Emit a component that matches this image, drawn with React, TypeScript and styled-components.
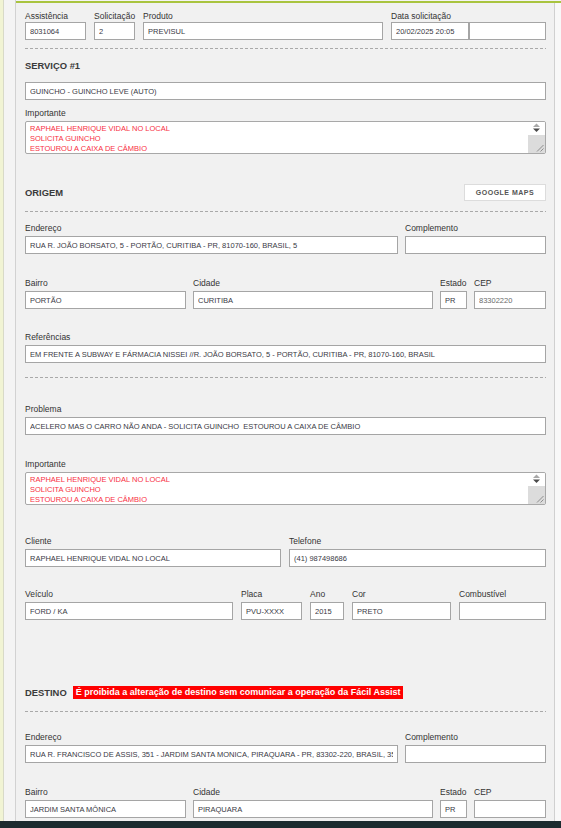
import React from "react";
import styled, { createGlobalStyle } from "styled-components";

const Global = createGlobalStyle`
  html, body { margin: 0; padding: 0; background: #f4f4f4; }
  body { font-family: "Liberation Sans", Arial, sans-serif; }
  * { box-sizing: border-box; }
`;

const Page = styled.div`
  display: flex;
  height: 828px;
  overflow: hidden;
  background: #f4f4f4;
`;

const YellowStrip = styled.div`
  width: 4px;
  flex: none;
  background: #f1f4d4;
  border-right: 1px solid #d8dac8;
`;

const Gutter = styled.div`
  width: 12px;
  flex: none;
  background: #f4f4f4;
  border-right: 1px solid #d2d2d2;
`;

const Main = styled.div`
  flex: 1;
  display: flex;
  margin-top: 1px;
  border-top: 2px solid #a9c43f;
`;

const Panel = styled.main`
  flex: 1;
  background: #f1f1f1;
  border-right: 1px solid #d0d0d0;
  padding: 7px 8px 0 9px;
  display: flex;
  flex-direction: column;
`;

const RightPad = styled.div`
  width: 6px;
  flex: none;
  background: #f8f8f8;
`;

const Row = styled.div<{ $mt: number; $gap?: number }>`
  display: flex;
  gap: ${(p) => p.$gap ?? 8}px;
  margin-top: ${(p) => p.$mt}px;
`;

const Field = styled.div<{ $w?: number }>`
  display: flex;
  flex-direction: column;
  ${(p) => (p.$w ? `width: ${p.$w}px; flex: none;` : `flex: 1; min-width: 0;`)}
`;

const Label = styled.label<{ $tight?: boolean }>`
  font-size: 8.5px;
  line-height: 12px;
  color: #333;
  margin-bottom: ${(p) => (p.$tight ? 0 : 2)}px;
  white-space: nowrap;
`;

const InputPair = styled.div`
  display: flex;
`;

const Input = styled.input<{ $muted?: boolean; $w?: number }>`
  display: block;
  height: 18px;
  ${(p) => (p.$w ? `width: ${p.$w}px; flex: none;` : `width: 100%;`)}
  min-width: 0;
  margin: 0;
  border: 1px solid #a5a5a5;
  border-radius: 0;
  background: #fff;
  padding: 0 4px;
  font-family: inherit;
  font-size: 7.5px;
  color: ${(p) => (p.$muted ? "#6a6a6a" : "#393944")};
  outline: none;
`;

const Divider = styled.hr<{ $mt: number }>`
  margin: ${(p) => p.$mt}px 0 0 0;
  border: none;
  height: 1px;
  background: repeating-linear-gradient(to right, #a9a9a9 0 3px, transparent 3px 5px);
`;

const SectionTitle = styled.h3<{ $mt?: number }>`
  margin: ${(p) => p.$mt ?? 0}px 0 0 0;
  font-size: 9.4px;
  font-weight: bold;
  line-height: 13px;
  color: #3a3a3a;
`;

const SectionHeader = styled.div<{ $mt: number; $h: number }>`
  display: flex;
  align-items: center;
  justify-content: space-between;
  height: ${(p) => p.$h}px;
  margin-top: ${(p) => p.$mt}px;
`;

const TitleGroup = styled.div`
  display: flex;
  align-items: center;
`;

const Warning = styled.span`
  background: #ff0000;
  color: #fff;
  font-weight: bold;
  font-size: 9px;
  line-height: 13px;
  padding: 0 3px;
  margin-left: 6px;
  white-space: nowrap;
`;

const MapsButton = styled.button`
  width: 82px;
  height: 17px;
  background: #fff;
  border: 1px solid #dcdcdc;
  padding: 0;
  font-family: inherit;
  font-weight: bold;
  font-size: 7px;
  letter-spacing: 0.5px;
  color: #555;
  cursor: pointer;
`;

const TextBox = styled.div`
  display: flex;
  height: 33px;
  border: 1px solid #a8a8a8;
  border-radius: 2px;
  background: #fff;
  overflow: hidden;
`;

const TextArea = styled.textarea`
  flex: 1;
  margin: 0;
  border: none;
  outline: none;
  resize: none;
  overflow: hidden;
  padding: 2px 4px;
  font-family: inherit;
  font-size: 7.5px;
  line-height: 10px;
  color: #f8303f;
  background: transparent;
`;

const ScrollBar = styled.div`
  width: 17px;
  flex: none;
  display: flex;
  flex-direction: column;
`;

const ScrollArrows = styled.div`
  height: 13px;
  display: flex;
  justify-content: center;
  padding-top: 1px;
  background: #fff;
`;

const ScrollTrack = styled.div`
  flex: 1;
  background: #dcdcdc;
  display: flex;
  align-items: flex-end;
  justify-content: flex-end;
  padding: 0 1px 1px 0;
`;

const Footer = styled.div`
  position: fixed;
  left: 0;
  right: 0;
  bottom: 0;
  height: 7px;
  background: #1c2b2f;
`;

type FieldProps = {
  label: string;
  value?: string;
  w?: number;
  tight?: boolean;
  muted?: boolean;
};

const TextField = ({ label, value = "", w, tight, muted }: FieldProps) => (
  <Field $w={w}>
    <Label $tight={tight}>{label}</Label>
    <Input readOnly value={value} $muted={muted} />
  </Field>
);

const Notes = ({ label, lines, mt }: { label: string; lines: string[]; mt: number }) => (
  <Row $mt={mt}>
    <Field>
      <Label>{label}</Label>
      <TextBox>
        <TextArea readOnly value={lines.join("\n")} />
        <ScrollBar>
          <ScrollArrows>
            <svg width="9" height="10" viewBox="0 0 9 10">
              <polygon points="1,4 4.5,0.5 8,4" fill="#a8a8a8" />
              <polygon points="1,5.5 8,5.5 4.5,9" fill="#4a4a4a" />
            </svg>
          </ScrollArrows>
          <ScrollTrack>
            <svg width="8" height="8" viewBox="0 0 8 8">
              <line x1="7.5" y1="1" x2="1" y2="7.5" stroke="#7a7a7a" strokeWidth="0.8" />
              <line x1="7.5" y1="4.5" x2="4.5" y2="7.5" stroke="#7a7a7a" strokeWidth="0.8" />
            </svg>
          </ScrollTrack>
        </ScrollBar>
      </TextBox>
    </Field>
  </Row>
);

const notes = [
  "RAPHAEL HENRIQUE VIDAL NO LOCAL",
  "SOLICITA GUINCHO",
  "ESTOUROU A CAIXA DE CÂMBIO",
];

export default function App() {
  return (
    <>
      <Global />
      <Page>
        <YellowStrip />
        <Gutter />
        <Main>
          <Panel>
            <Row $mt={0}>
              <TextField label="Assistência" value="8031064" w={61} tight />
              <TextField label="Solicitação" value="2" w={41} tight />
              <TextField label="Produto" value="PREVISUL" w={240} tight />
              <Field>
                <Label $tight>Data solicitação</Label>
                <InputPair>
                  <Input readOnly value="20/02/2025 20:05" $w={78} />
                  <Input readOnly value="" />
                </InputPair>
              </Field>
            </Row>

            <Divider $mt={8} />

            <SectionTitle $mt={10}>SERVIÇO #1</SectionTitle>
            <Row $mt={10}>
              <Field>
                <Input readOnly value="GUINCHO - GUINCHO LEVE (AUTO)" />
              </Field>
            </Row>

            <Notes label="Importante" lines={notes} mt={7} />

            <SectionHeader $mt={30} $h={17}>
              <SectionTitle>ORIGEM</SectionTitle>
              <MapsButton type="button">GOOGLE MAPS</MapsButton>
            </SectionHeader>

            <Divider $mt={10} />

            <Row $mt={10} $gap={7}>
              <TextField
                label="Endereço"
                value="RUA R. JOÃO BORSATO, 5 - PORTÃO, CURITIBA - PR, 81070-160, BRASIL, 5"
              />
              <TextField label="Complemento" w={141} />
            </Row>

            <Row $mt={23} $gap={7}>
              <TextField label="Bairro" value="PORTÃO" w={161} />
              <TextField label="Cidade" value="CURITIBA" />
              <TextField label="Estado" value="PR" w={27} />
              <TextField label="CEP" value="83302220" w={72} muted />
            </Row>

            <Row $mt={22}>
              <TextField
                label="Referências"
                value="EM FRENTE A SUBWAY E FÁRMACIA NISSEI //R. JOÃO BORSATO, 5 - PORTÃO, CURITIBA - PR, 81070-160, BRASIL"
              />
            </Row>

            <Divider $mt={14} />

            <Row $mt={25}>
              <TextField
                label="Problema"
                value="ACELERO MAS O CARRO NÃO ANDA - SOLICITA GUINCHO  ESTOUROU A CAIXA DE CÂMBIO"
              />
            </Row>

            <Notes label="Importante" lines={notes} mt={23} />

            <Row $mt={30}>
              <TextField label="Cliente" value="RAPHAEL HENRIQUE VIDAL NO LOCAL" w={256} />
              <TextField label="Telefone" value="(41) 987498686" />
            </Row>

            <Row $mt={21}>
              <TextField label="Veículo" value="FORD / KA" w={208} />
              <TextField label="Placa" value="PVU-XXXX" w={61} />
              <TextField label="Ano" value="2015" w={34} />
              <TextField label="Cor" value="PRETO" w={99} />
              <TextField label="Combustível" />
            </Row>

            <SectionHeader $mt={66} $h={13}>
              <TitleGroup>
                <SectionTitle>DESTINO</SectionTitle>
                <Warning>É proibida a alteração de destino sem comunicar a operação da Fácil Assist</Warning>
              </TitleGroup>
            </SectionHeader>

            <Divider $mt={12} />

            <Row $mt={19} $gap={7}>
              <TextField
                label="Endereço"
                value="RUA R. FRANCISCO DE ASSIS, 351 - JARDIM SANTA MONICA, PIRAQUARA - PR, 83302-220, BRASIL, 351"
              />
              <TextField label="Complemento" w={141} />
            </Row>

            <Row $mt={23} $gap={7}>
              <TextField label="Bairro" value="JARDIM SANTA MÔNICA" w={161} />
              <TextField label="Cidade" value="PIRAQUARA" />
              <TextField label="Estado" value="PR" w={27} />
              <TextField label="CEP" w={72} />
            </Row>
          </Panel>
          <RightPad />
        </Main>
      </Page>
      <Footer />
    </>
  );
}
